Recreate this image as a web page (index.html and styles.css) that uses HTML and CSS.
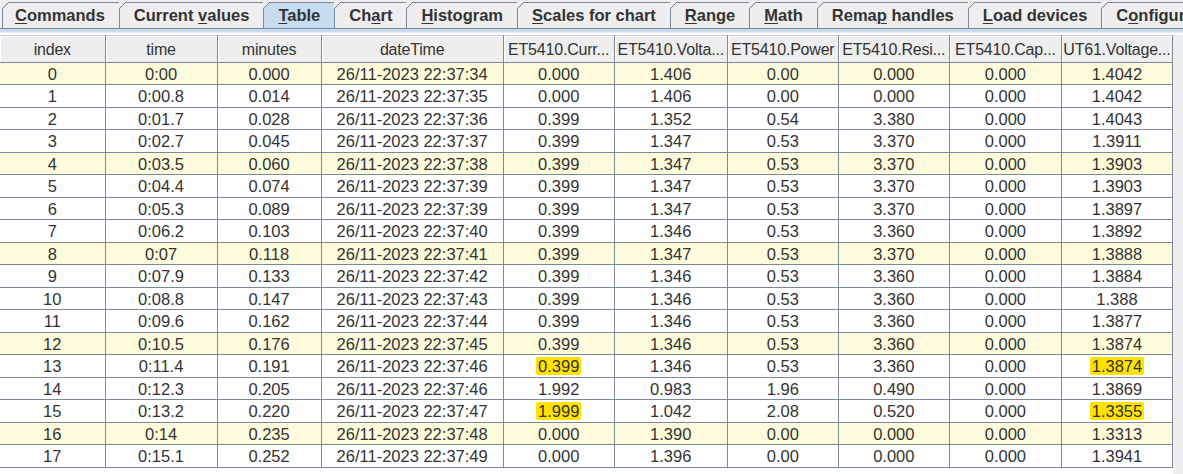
FILE: index.html
```html
<!DOCTYPE html>
<html>
<head>
<meta charset="utf-8">
<link rel="stylesheet" href="styles.css">
</head>
<body>
<div class="tabbar">
  <div class="tab"><u>C</u>ommands</div>
  <div class="tab">Current <u>v</u>alues</div>
  <div class="tab sel"><u>T</u>able</div>
  <div class="tab">Ch<u>a</u>rt</div>
  <div class="tab"><u>H</u>istogram</div>
  <div class="tab"><u>S</u>cales for chart</div>
  <div class="tab"><u>R</u>ange</div>
  <div class="tab"><u>M</u>ath</div>
  <div class="tab">Rema<u>p</u> handles</div>
  <div class="tab"><u>L</u>oad devices</div>
  <div class="tab">C<u>o</u>nfigur</div>
</div>
<div class="band"></div>
<div class="viewport">
  <table class="grid">
    <colgroup>
      <col class="c-idx"><col class="c-time"><col class="c-min"><col class="c-dt">
      <col class="c-a"><col class="c-b"><col class="c-c"><col class="c-d"><col class="c-e"><col class="c-f">
    </colgroup>
    <thead>
      <tr>
        <th>index</th><th>time</th><th>minutes</th><th>dateTime</th>
        <th>ET5410.Curr...</th><th>ET5410.Volta...</th><th>ET5410.Power</th><th>ET5410.Resi...</th><th>ET5410.Cap...</th><th>UT61.Voltage...</th>
      </tr>
    </thead>
    <tbody>
      <tr class="y e"><td>0</td><td>0:00</td><td>0.000</td><td>26/11-2023 22:37:34</td><td>0.000</td><td>1.406</td><td>0.00</td><td>0.000</td><td>0.000</td><td>1.4042</td></tr>
      <tr class="o"><td>1</td><td>0:00.8</td><td>0.014</td><td>26/11-2023 22:37:35</td><td>0.000</td><td>1.406</td><td>0.00</td><td>0.000</td><td>0.000</td><td>1.4042</td></tr>
      <tr class="e"><td>2</td><td>0:01.7</td><td>0.028</td><td>26/11-2023 22:37:36</td><td>0.399</td><td>1.352</td><td>0.54</td><td>3.380</td><td>0.000</td><td>1.4043</td></tr>
      <tr class="o"><td>3</td><td>0:02.7</td><td>0.045</td><td>26/11-2023 22:37:37</td><td>0.399</td><td>1.347</td><td>0.53</td><td>3.370</td><td>0.000</td><td>1.3911</td></tr>
      <tr class="y e"><td>4</td><td>0:03.5</td><td>0.060</td><td>26/11-2023 22:37:38</td><td>0.399</td><td>1.347</td><td>0.53</td><td>3.370</td><td>0.000</td><td>1.3903</td></tr>
      <tr class="o"><td>5</td><td>0:04.4</td><td>0.074</td><td>26/11-2023 22:37:39</td><td>0.399</td><td>1.347</td><td>0.53</td><td>3.370</td><td>0.000</td><td>1.3903</td></tr>
      <tr class="e"><td>6</td><td>0:05.3</td><td>0.089</td><td>26/11-2023 22:37:39</td><td>0.399</td><td>1.347</td><td>0.53</td><td>3.370</td><td>0.000</td><td>1.3897</td></tr>
      <tr class="o"><td>7</td><td>0:06.2</td><td>0.103</td><td>26/11-2023 22:37:40</td><td>0.399</td><td>1.346</td><td>0.53</td><td>3.360</td><td>0.000</td><td>1.3892</td></tr>
      <tr class="y e"><td>8</td><td>0:07</td><td>0.118</td><td>26/11-2023 22:37:41</td><td>0.399</td><td>1.347</td><td>0.53</td><td>3.370</td><td>0.000</td><td>1.3888</td></tr>
      <tr class="o"><td>9</td><td>0:07.9</td><td>0.133</td><td>26/11-2023 22:37:42</td><td>0.399</td><td>1.346</td><td>0.53</td><td>3.360</td><td>0.000</td><td>1.3884</td></tr>
      <tr class="e"><td>10</td><td>0:08.8</td><td>0.147</td><td>26/11-2023 22:37:43</td><td>0.399</td><td>1.346</td><td>0.53</td><td>3.360</td><td>0.000</td><td>1.388</td></tr>
      <tr class="o"><td>11</td><td>0:09.6</td><td>0.162</td><td>26/11-2023 22:37:44</td><td>0.399</td><td>1.346</td><td>0.53</td><td>3.360</td><td>0.000</td><td>1.3877</td></tr>
      <tr class="y e"><td>12</td><td>0:10.5</td><td>0.176</td><td>26/11-2023 22:37:45</td><td>0.399</td><td>1.346</td><td>0.53</td><td>3.360</td><td>0.000</td><td>1.3874</td></tr>
      <tr class="o"><td>13</td><td>0:11.4</td><td>0.191</td><td>26/11-2023 22:37:46</td><td><span class="mark">0.399</span></td><td>1.346</td><td>0.53</td><td>3.360</td><td>0.000</td><td><span class="mark">1.3874</span></td></tr>
      <tr class="e"><td>14</td><td>0:12.3</td><td>0.205</td><td>26/11-2023 22:37:46</td><td>1.992</td><td>0.983</td><td>1.96</td><td>0.490</td><td>0.000</td><td>1.3869</td></tr>
      <tr class="o"><td>15</td><td>0:13.2</td><td>0.220</td><td>26/11-2023 22:37:47</td><td><span class="mark">1.999</span></td><td>1.042</td><td>2.08</td><td>0.520</td><td>0.000</td><td><span class="mark">1.3355</span></td></tr>
      <tr class="y e"><td>16</td><td>0:14</td><td>0.235</td><td>26/11-2023 22:37:48</td><td>0.000</td><td>1.390</td><td>0.00</td><td>0.000</td><td>0.000</td><td>1.3313</td></tr>
      <tr class="o"><td>17</td><td>0:15.1</td><td>0.252</td><td>26/11-2023 22:37:49</td><td>0.000</td><td>1.396</td><td>0.00</td><td>0.000</td><td>0.000</td><td>1.3941</td></tr>
    </tbody>
  </table>
  <div class="track"></div>
</div>
</body>
</html>
```
FILE: styles.css
```css
html, body {
  margin: 0;
  padding: 0;
  background: #ffffff;
}
body {
  width: 1183px;
  height: 474px;
  overflow: hidden;
  font-family: "Liberation Sans", Arial, sans-serif;
  color: #333333;
}
.tabbar {
  display: flex;
  height: 29px;
  box-sizing: border-box;
  padding: 2px 0 0 2px;
  background: #eeeeee;
  border-bottom: 1px solid #7a8a99;
  white-space: nowrap;
  overflow: hidden;
}
.tab {
  position: relative;
  flex: none;
  height: 27px;
  box-sizing: border-box;
  padding: 0 14px 0 14px;
  border-left: 1px solid #7a8a99;
  border-top: 1px solid #7a8a99;
  background: #eeeeee;
  font-weight: bold;
  font-size: 16.5px;
  line-height: 25px;
  color: #333333;
}
.tab:first-child {
  padding-left: 12px;
}
.tab:last-child {
  padding-right: 0;
}
.tab u {
  text-decoration-thickness: 1px;
  text-underline-offset: 2px;
}
.tab::before {
  content: "";
  position: absolute;
  left: -1px;
  top: -1px;
  width: 7px;
  height: 7px;
  background: linear-gradient(to bottom right, #eeeeee 0, #eeeeee calc(50% - 0.8px), #7a8a99 50%, #eeeeee calc(50% + 0.8px));
}
.tab.sel {
  background: #c8dcf0;
  height: 28px;
  margin-bottom: -1px;
}
.tab.sel::before {
  background: linear-gradient(to bottom right, #eeeeee 0, #eeeeee calc(50% - 0.8px), #7a8a99 50%, #c8dcf0 calc(50% + 0.8px));
}
.band {
  height: 3px;
  background: #c8dcf0;
  border-bottom: 1px solid #e4ebf2;
}
.viewport {
  display: flex;
  align-items: stretch;
  height: 439px;
  padding-top: 2px;
}
.grid {
  flex: none;
  table-layout: fixed;
  border-collapse: collapse;
  width: 1173px;
  align-self: flex-start;
}
.track {
  flex: 1;
  background: #eeeeee;
}
.c-idx { width: 105px; }
.c-time { width: 112px; }
.c-min { width: 104px; }
.c-dt { width: 182px; }
.c-a { width: 111px; }
.c-b { width: 113px; }
.c-c { width: 111px; }
.c-d { width: 111px; }
.c-e { width: 112px; }
.c-f { width: 111px; }
th {
  height: 24px;
  padding: 2px 0 0 0;
  background: #eeeeee;
  font-weight: normal;
  font-size: 16px;
  letter-spacing: -0.2px;
  line-height: 20px;
  color: #333333;
  text-align: center;
  white-space: nowrap;
  overflow: hidden;
  border-right: 1px solid #7a8a99;
  border-bottom: 1px solid #7a8a99;
  border-top: 1px solid #c9d2da;
  box-shadow: inset 1px 1px 0 #ffffff;
}
td {
  padding: 0;
  font-size: 16.5px;
  text-align: center;
  white-space: nowrap;
  color: #333333;
  border: 1px solid #7a8a99;
  line-height: 18px;
}
td:first-child { border-left: none; }
tr.e td { height: 21px; }
tr.o td { height: 22px; }
tr.y td { background: #fdfbdc; }
.mark {
  background: #ffe200;
  padding: 0 2px;
  border-radius: 2px;
}
```
